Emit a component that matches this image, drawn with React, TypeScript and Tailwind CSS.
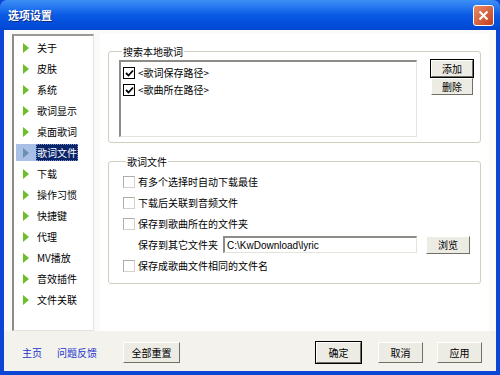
import React from "react";

const menu = ["关于", "皮肤", "系统", "歌词显示", "桌面歌词", "歌词文件", "下载", "操作习惯", "快捷键", "代理", "MV播放", "音效插件", "文件关联"];

const Btn: React.FC<{ label: string; className?: string; strong?: boolean }> = ({ label, className = "", strong }) => (
  <button
    className={`flex items-center justify-center whitespace-nowrap bg-[#ecebe4] text-[10px] text-black border border-t-white border-l-white border-r-[#716f64] border-b-[#716f64] ${strong ? "outline outline-1 outline-black" : ""} ${className}`}
  >
    {label}
  </button>
);

const Check: React.FC<{ checked?: boolean }> = ({ checked }) =>
  checked ? (
    <span className="flex h-[12px] w-[12px] shrink-0 items-center justify-center border border-black bg-white">
      <svg width="9" height="8" viewBox="0 0 9 8">
        <path d="M1 4 L3.5 6.5 L8 1.5" fill="none" stroke="black" strokeWidth="1.8" />
      </svg>
    </span>
  ) : (
    <span className="h-[12px] w-[12px] shrink-0 border border-[#d2d1cb] border-t-[#aeada7] border-l-[#aeada7] bg-white" />
  );

const Option: React.FC<{ label: string }> = ({ label }) => (
  <div className="flex h-[21px] items-center gap-[3px] whitespace-nowrap">
    <Check />
    <span>{label}</span>
  </div>
);

export default function App() {
  return (
    <div
      className="flex h-[375px] w-[500px] flex-col overflow-hidden bg-[#0b45d6] text-[10px] text-black"
      style={{ fontFamily: '"Noto Sans CJK SC", "Liberation Sans", sans-serif' }}
    >
      {/* title bar */}
      <div className="flex h-[30px] shrink-0 items-center justify-between rounded-t-[7px] bg-gradient-to-b from-[#3d8ff5] via-[#0a5ae6] to-[#0046d2] pl-[8px] pr-[6px]">
        <span className="text-[11px] font-bold text-white [text-shadow:1px_1px_0_#0a2a8a]">选项设置</span>
        <div className="flex h-[21px] w-[21px] items-center justify-center rounded-[3px] border border-white bg-gradient-to-br from-[#e98a68] to-[#c23d18]">
          <svg width="11" height="11" viewBox="0 0 11 11">
            <path d="M1.5 1.5 L9.5 9.5 M9.5 1.5 L1.5 9.5" stroke="white" strokeWidth="2" />
          </svg>
        </div>
      </div>

      {/* body */}
      <div className="mx-[4px] mb-[4px] flex flex-1 flex-col bg-[#f3f2ec]">
        <div className="flex h-[301px] gap-[6px] bg-[#fafaf8] pl-[8px] pr-[7px] pt-[4px]">
          {/* left menu */}
          <div className="h-[297px] w-[86px] border-l-2 border-t-2 border-l-[#8d8c86] border-t-[#9a9993] border-r border-b border-r-[#e4e3dc] border-b-[#e4e3dc] bg-white pt-[1px]">
            {menu.map((m) => {
              const sel = m === "歌词文件";
              return (
                <div key={m} className="flex h-[21px] items-center pl-[2px] whitespace-nowrap">
                  <div className={`flex h-[17px] w-[20px] items-center justify-center ${sel ? "bg-[#a9bfe6]" : ""}`}>
                    <svg width="6" height="10" viewBox="0 0 6 10">
                      <path d="M0 0 L6 5 L0 10 Z" fill={sel ? "#6a8fb0" : "#6cbf2a"} />
                    </svg>
                  </div>
                  <span
                    className={`flex h-[17px] items-center px-[1px] ${sel ? "bg-[#0a246a] text-white outline-1 outline-dotted outline-[#8090c0] -outline-offset-1" : ""}`}
                  >
                    {m}
                  </span>
                </div>
              );
            })}
          </div>

          {/* right panel */}
          <div className="flex h-[297px] flex-1 flex-col bg-white px-[8px] pt-[11px]">
            <fieldset className="h-[98px] rounded-[3px] border border-[#d0d0bf] pl-[10px] pr-[6px]">
              <legend className="ml-[3px] px-[1px] leading-[13px]">搜索本地歌词</legend>
              <div className="mt-[2px] flex gap-[14px]">
                <div className="h-[77px] w-[298px] border-l-2 border-t-2 border-l-[#8d8c86] border-t-[#8d8c86] border-r border-b border-r-[#e4e3dc] border-b-[#e4e3dc] bg-white px-[2px] pt-[2px]">
                  <div className="flex h-[17px] items-center gap-[3px]">
                    <Check checked />
                    <span>&lt;歌词保存路径&gt;</span>
                  </div>
                  <div className="flex h-[17px] items-center gap-[3px]">
                    <Check checked />
                    <span>&lt;歌曲所在路径&gt;</span>
                  </div>
                </div>
                <div className="flex flex-col">
                  <Btn label="添加" strong className="h-[17px] w-[42px]" />
                  <Btn label="删除" className="mt-[1px] h-[17px] w-[42px]" />
                </div>
              </div>
            </fieldset>

            <fieldset className="mt-[12px] h-[129px] rounded-[3px] border border-[#d0d0bf] pl-[14px] pr-[10px]">
              <legend className="ml-[3px] px-[1px] leading-[13px]">歌词文件</legend>
              <div className="mt-[3px] flex flex-col">
                <Option label="有多个选择时自动下载最佳" />
                <Option label="下载后关联到音频文件" />
                <Option label="保存到歌曲所在的文件夹" />
                <div className="flex h-[21px] items-center pl-[15px] whitespace-nowrap">
                  <span className="w-[85px]">保存到其它文件夹</span>
                  <div
                    className="flex h-[17px] w-[194px] items-center border-l-2 border-t-2 border-l-[#8d8c86] border-t-[#8d8c86] border-r border-b border-r-[#e4e3dc] border-b-[#e4e3dc] bg-white px-[2px] text-[10px]"
                    style={{ fontFamily: '"Liberation Sans", sans-serif' }}
                  >
                    C:\KwDownload\lyric
                  </div>
                  <Btn label="浏览" className="ml-[9px] h-[18px] w-[44px]" />
                </div>
                <Option label="保存成歌曲文件相同的文件名" />
              </div>
            </fieldset>
          </div>
        </div>

        {/* bottom bar */}
        <div className="flex flex-1 items-center pl-[18px] pr-[14px] pt-[2px] whitespace-nowrap">
          <a className="text-[#2233cc]">主页</a>
          <a className="ml-[15px] text-[#2233cc]">问题反馈</a>
          <Btn label="全部重置" className="ml-[26px] h-[21px] w-[57px]" />
          <Btn label="确定" strong className="ml-auto h-[21px] w-[45px]" />
          <Btn label="取消" className="ml-[17px] h-[21px] w-[45px]" />
          <Btn label="应用" className="ml-[14px] h-[21px] w-[45px]" />
        </div>
      </div>
    </div>
  );
}
